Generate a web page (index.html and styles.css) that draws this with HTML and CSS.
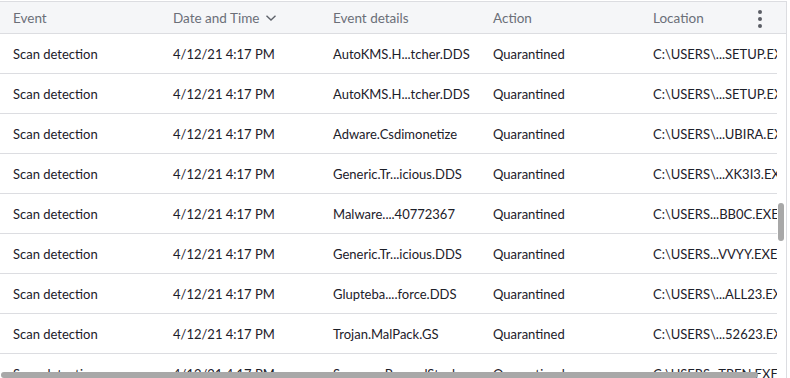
FILE: index.html
```html
<!DOCTYPE html>
<html>
<head>
<meta charset="utf-8">
<link rel="stylesheet" href="styles.css">
</head>
<body>
<div class="frame">
  <div class="head">
    <div class="cell">Event</div>
    <div class="cell">Date and Time
      <svg class="chev" width="12" height="8" viewBox="0 0 12 8"><path d="M1.5 1.8 L6 6 L10.5 1.8" fill="none" stroke="#5f636b" stroke-width="1.4"/></svg>
    </div>
    <div class="cell">Event details</div>
    <div class="cell">Action</div>
    <div class="cell loc">Location</div>
    <div class="kebab"><span></span><span></span><span></span></div>
  </div>
  <div class="body">
    <div class="rows">
      <div class="row"><div class="cell">Scan detection</div><div class="cell">4/12/21 4:17 PM</div><div class="cell">AutoKMS.H...tcher.DDS</div><div class="cell">Quarantined</div><div class="cell">C:\USERS\...SETUP.EXE</div></div>
      <div class="row"><div class="cell">Scan detection</div><div class="cell">4/12/21 4:17 PM</div><div class="cell">AutoKMS.H...tcher.DDS</div><div class="cell">Quarantined</div><div class="cell">C:\USERS\...SETUP.EXE</div></div>
      <div class="row"><div class="cell">Scan detection</div><div class="cell">4/12/21 4:17 PM</div><div class="cell">Adware.Csdimonetize</div><div class="cell">Quarantined</div><div class="cell">C:\USERS\...UBIRA.EXE</div></div>
      <div class="row"><div class="cell">Scan detection</div><div class="cell">4/12/21 4:17 PM</div><div class="cell">Generic.Tr...icious.DDS</div><div class="cell">Quarantined</div><div class="cell">C:\USERS\...XK3I3.EXE</div></div>
      <div class="row"><div class="cell">Scan detection</div><div class="cell">4/12/21 4:17 PM</div><div class="cell">Malware....40772367</div><div class="cell">Quarantined</div><div class="cell">C:\USERS...BB0C.EXE</div></div>
      <div class="row"><div class="cell">Scan detection</div><div class="cell">4/12/21 4:17 PM</div><div class="cell">Generic.Tr...icious.DDS</div><div class="cell">Quarantined</div><div class="cell">C:\USERS...VVYY.EXE</div></div>
      <div class="row"><div class="cell">Scan detection</div><div class="cell">4/12/21 4:17 PM</div><div class="cell">Glupteba....force.DDS</div><div class="cell">Quarantined</div><div class="cell">C:\USERS\...ALL23.EXE</div></div>
      <div class="row"><div class="cell">Scan detection</div><div class="cell">4/12/21 4:17 PM</div><div class="cell">Trojan.MalPack.GS</div><div class="cell">Quarantined</div><div class="cell">C:\USERS\...52623.EXE</div></div>
      <div class="row"><div class="cell">Scan detection</div><div class="cell">4/12/21 4:17 PM</div><div class="cell">Spyware.PasswdStealer</div><div class="cell">Quarantined</div><div class="cell">C:\USERS...TREN.EXE</div></div>
    </div>
    <div class="vthumb"></div>
    <div class="hthumb"></div>
  </div>
</div>
</body>
</html>
```

FILE: styles.css
```css
html, body {
  margin: 0;
  padding: 0;
  background: #ffffff;
}
body {
  font-family: Lato, "Open Sans", sans-serif;
  font-size: 13px;
  color: #1c2029;
  overflow: hidden;
}
.frame {
  margin-top: 1px;
  width: 786px;
  height: 377px;
  border-top: 1px solid #dcdde1;
  border-right: 1px solid #dcdde1;
  overflow: hidden;
  position: relative;
}
.head {
  display: flex;
  height: 31px;
  background: #f5f6f8;
  border-bottom: 1px solid #dcdde1;
  position: relative;
  color: #6b6f78;
}
.cell {
  flex: 0 0 160px;
  box-sizing: border-box;
  padding-left: 13px;
  display: flex;
  align-items: center;
  white-space: nowrap;
  overflow: hidden;
}
.head .cell {
  font-size: 13.5px;
}
.chev {
  margin-left: 6px;
  margin-top: 1px;
}
.kebab {
  position: absolute;
  left: 758px;
  top: 8px;
  display: flex;
  flex-direction: column;
  gap: 3px;
}
.kebab span {
  width: 4px;
  height: 4px;
  border-radius: 50%;
  background: #5b5e66;
}
.body {
  position: relative;
  height: 345px;
  overflow: hidden;
}
.rows {
  width: 777px;
  overflow: hidden;
}
.row {
  display: flex;
  width: 800px;
  height: 40px;
  box-sizing: border-box;
  border-bottom: 1px solid #dcdde1;
}
.row .cell:last-child {
  flex-basis: 140px;
}
.vthumb {
  position: absolute;
  left: 778px;
  top: 169px;
  width: 6px;
  height: 38px;
  border-radius: 3px;
  background: #a8a8a8;
}
.hthumb {
  position: absolute;
  left: 1px;
  top: 338px;
  width: 757px;
  height: 6px;
  border-radius: 3px;
  background: #a8a8a8;
}
```
